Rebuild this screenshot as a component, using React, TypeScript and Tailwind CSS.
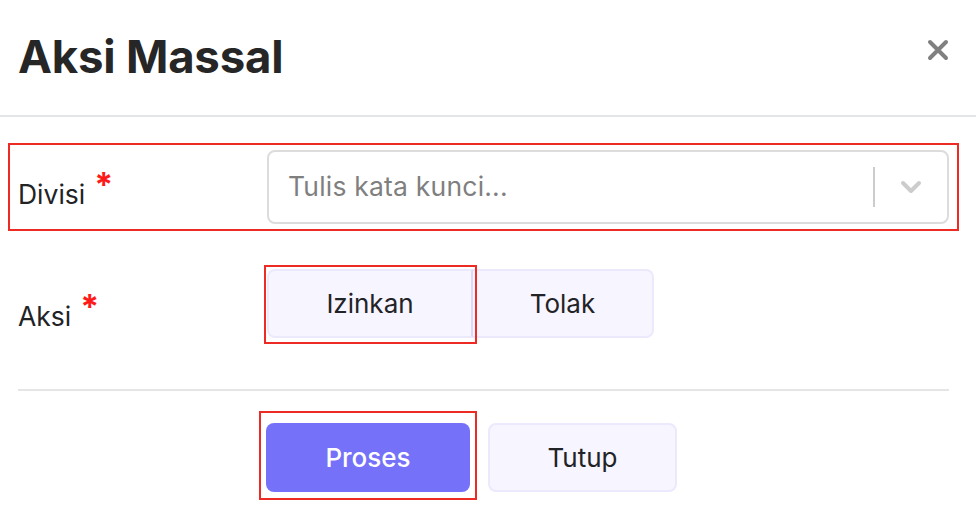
import React from 'react';

const font = { fontFamily: 'Inter, "Noto Sans", sans-serif' };

function Asterisk() {
  return <span className="ml-[9px] -mt-[20px] text-[34px] font-bold leading-none text-[#ff1a1a]">*</span>;
}

export default function App() {
  return (
    <div className="w-[976px] h-[518px] bg-white overflow-hidden text-[#222326]" style={font}>
      {/* Header */}
      <div className="h-[117px] flex items-start justify-between pl-[18px] pr-[26px] border-b-2 border-[#e3e5e8]">
        <h1 className="mt-[23px] text-[45.5px] font-bold tracking-[-0.2px] text-[#262626]">Aksi Massal</h1>
        <button className="mt-[38px] text-[#808080]">
          <svg width="24" height="24" viewBox="0 0 24 24">
            <path d="M4 4 L20 20 M20 4 L4 20" stroke="currentColor" strokeWidth="4" strokeLinecap="round" />
          </svg>
        </button>
      </div>

      {/* Divisi */}
      <div className="mt-[26px] ml-[8px] mr-[17px] border-2 border-[#ee2a24] px-[8px] py-[5px] flex items-center">
        <div className="w-[249px] flex items-center pt-[16px]">
          <span className="text-[26.5px]">Divisi</span>
          <Asterisk />
        </div>
        <div className="flex-1 h-[74px] rounded-[8px] border-2 border-[#dcdcdc] flex items-center">
          <span className="flex-1 pl-[19px] text-[26.5px] tracking-[0.2px] text-[#7f7f7f]">Tulis kata kunci...</span>
          <span className="w-[2px] h-[40px] bg-[#cccccc]" />
          <span className="w-[72px] flex justify-center text-[#cccccc]">
            <svg width="22" height="14" viewBox="0 0 22 14">
              <path d="M3 3 L11 11 L19 3" fill="none" stroke="currentColor" strokeWidth="4" strokeLinecap="round" strokeLinejoin="round" />
            </svg>
          </span>
        </div>
      </div>

      {/* Aksi */}
      <div className="mt-[38px] pl-[18px] flex items-center">
        <div className="w-[249px] flex items-center pt-[26px]">
          <span className="text-[26.5px]">Aksi</span>
          <Asterisk />
        </div>
        <div className="flex">
          <div className="relative">
            <button className="w-[206px] h-[69px] bg-[#f7f5ff] border-2 border-[#ece9fc] border-r-[#dcd8f6] rounded-l-[8px] text-[26px]">
              Izinkan
            </button>
            <span className="absolute -left-[3px] -top-[4px] -right-[4px] -bottom-[6px] border-2 border-[#ee2a24]" />
          </div>
          <button className="w-[181px] h-[69px] bg-[#f7f5ff] border-2 border-l-0 border-[#ece9fc] rounded-r-[8px] text-[26px]">
            Tolak
          </button>
        </div>
      </div>

      <div className="mt-[51px] ml-[18px] mr-[27px] h-[2px] bg-[#e5e5e5]" />

      {/* Actions */}
      <div className="mt-[32px] pl-[266px] flex gap-[18px]">
        <div className="relative">
          <button className="w-[204px] h-[69px] bg-[#7571f9] rounded-[8px] text-[26px] font-medium text-white">
            Proses
          </button>
          <span className="absolute -left-[7px] -top-[12px] -right-[7px] -bottom-[8px] border-2 border-[#ee2a24]" />
        </div>
        <button className="w-[189px] h-[69px] bg-[#f7f5ff] border-2 border-[#ece9fc] rounded-[8px] text-[26px]">
          Tutup
        </button>
      </div>
    </div>
  );
}
